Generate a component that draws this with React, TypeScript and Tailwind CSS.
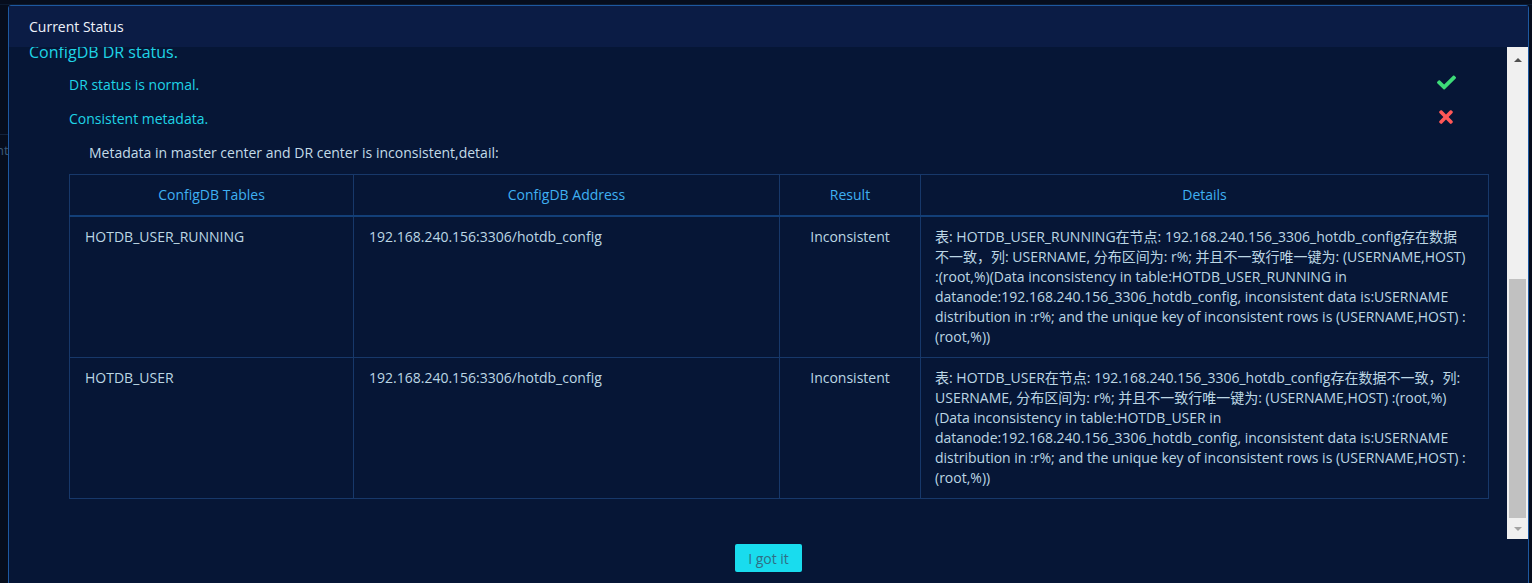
import React from "react"
import { FaCheck, FaTimes } from "react-icons/fa"

type Row = { table: string; address: string; result: string; details: string }

const rows: Row[] = [
  {
    table: "HOTDB_USER_RUNNING",
    address: "192.168.240.156:3306/hotdb_config",
    result: "Inconsistent",
    details:
      "表: HOTDB_USER_RUNNING在节点: 192.168.240.156_3306_hotdb_config存在数据不一致，列: USERNAME, 分布区间为: r%; 并且不一致行唯一键为: (USERNAME,HOST) :(root,%)(Data inconsistency in table:HOTDB_USER_RUNNING in datanode:192.168.240.156_3306_hotdb_config, inconsistent data is:USERNAME distribution in :r%; and the unique key of inconsistent rows is (USERNAME,HOST) :(root,%))",
  },
  {
    table: "HOTDB_USER",
    address: "192.168.240.156:3306/hotdb_config",
    result: "Inconsistent",
    details:
      "表: HOTDB_USER在节点: 192.168.240.156_3306_hotdb_config存在数据不一致，列: USERNAME, 分布区间为: r%; 并且不一致行唯一键为: (USERNAME,HOST) :(root,%)(Data inconsistency in table:HOTDB_USER in datanode:192.168.240.156_3306_hotdb_config, inconsistent data is:USERNAME distribution in :r%; and the unique key of inconsistent rows is (USERNAME,HOST) :(root,%))",
  },
]

function Scrollbar() {
  return (
    <div className="w-[21px] shrink-0 bg-[#f0f0f0] flex flex-col items-center">
      <div className="h-[26px] w-full flex items-center justify-center">
        <div className="w-0 h-0 border-l-[4px] border-r-[4px] border-b-[4px] border-l-transparent border-r-transparent border-b-[#505050]" />
      </div>
      <div className="h-[206px]" />
      <div className="w-[17px] h-[239px] bg-[#c1c1c1]" />
      <div className="flex-1 w-full flex items-center justify-center">
        <div className="w-0 h-0 border-l-[4px] border-r-[4px] border-t-[4px] border-l-transparent border-r-transparent border-t-[#a3a3a3]" />
      </div>
    </div>
  )
}

export default function App() {
  return (
    <div className="relative h-[583px] w-full overflow-hidden bg-[#060d1d] font-['Open_Sans','Noto_Sans_CJK_SC',sans-serif] text-[14px]">
      {/* page behind the dialog */}
      <div className="absolute left-0 top-0 h-[5px] w-full border-b border-[#0c1a30]" />
      <div className="absolute left-0 top-[134px] h-px w-[8px] bg-[#13233d]" />
      <div className="absolute left-[-4px] top-[141px] text-[13px] text-[#3d5a78]">nt</div>

      <div className="absolute left-[8px] top-[5px] w-[1521px] h-[600px] border border-[#1d58a0] rounded-t-[3px] bg-[#061636] flex flex-col">
        <div className="h-[41px] shrink-0 bg-[#0b1c45] flex items-center pl-[20px] text-[#eef2fa] font-medium">
          Current Status
        </div>

        <div className="h-[492px] shrink-0 flex">
          <div className="flex-1 overflow-hidden">
            <div className="-mt-[6px] pl-[20px] pr-[20px]">
              <div className="h-[22px] leading-[22px] text-[16px] text-[#1fd4e6]">ConfigDB DR status.</div>
              <div className="ml-[40px] mt-[4px]">
                <div className="h-[34px] flex items-center justify-between text-[#1fd4e6]">
                  <span>DR status is normal.</span>
                  <FaCheck className="mr-[31px] -mt-[4px] text-[#3ddc78]" size={19} />
                </div>
                <div className="h-[34px] flex items-center justify-between text-[#1fd4e6]">
                  <span>Consistent metadata.</span>
                  <FaTimes className="mr-[31px] -mt-[2px] text-[#ff5757]" size={20} />
                </div>
                <div className="h-[34px] flex items-center pl-[20px] text-[#c3dbe8]">
                  Metadata in master center and DR center is inconsistent,detail:
                </div>

                <table className="mt-[5px] w-[1419px] table-fixed border-collapse text-[14px] leading-[20px]">
                  <colgroup>
                    <col className="w-[284px]" />
                    <col className="w-[426px]" />
                    <col className="w-[141px]" />
                    <col className="w-[568px]" />
                  </colgroup>
                  <thead>
                    <tr className="h-[41px]">
                      {["ConfigDB Tables", "ConfigDB Address", "Result", "Details"].map(h => (
                        <th key={h} className="border border-[#17386a] border-b-2 border-b-[#123f78] font-normal text-[#3fb0f2] text-center">
                          {h}
                        </th>
                      ))}
                    </tr>
                  </thead>
                  <tbody>
                    {rows.map(r => (
                      <tr key={r.table} className="text-[#bcd6e4] align-top">
                        <td className="border border-[#17386a] px-[15px] py-[10px]">{r.table}</td>
                        <td className="border border-[#17386a] px-[15px] py-[10px]">{r.address}</td>
                        <td className="border border-[#17386a] px-[15px] py-[10px] text-center">{r.result}</td>
                        <td className="border border-[#17386a] pl-[14px] pr-[21px] py-[10px] h-[141px]">{r.details}</td>
                      </tr>
                    ))}
                  </tbody>
                </table>
                <div className="h-[60px]" />
              </div>
            </div>
          </div>
          <Scrollbar />
        </div>

        <div className="flex justify-center pt-[5px]">
          <button className="h-[28px] w-[67px] rounded-[2px] bg-[#19dcee] text-[14px] text-[#2f6f86]">I got it</button>
        </div>
      </div>
    </div>
  )
}
